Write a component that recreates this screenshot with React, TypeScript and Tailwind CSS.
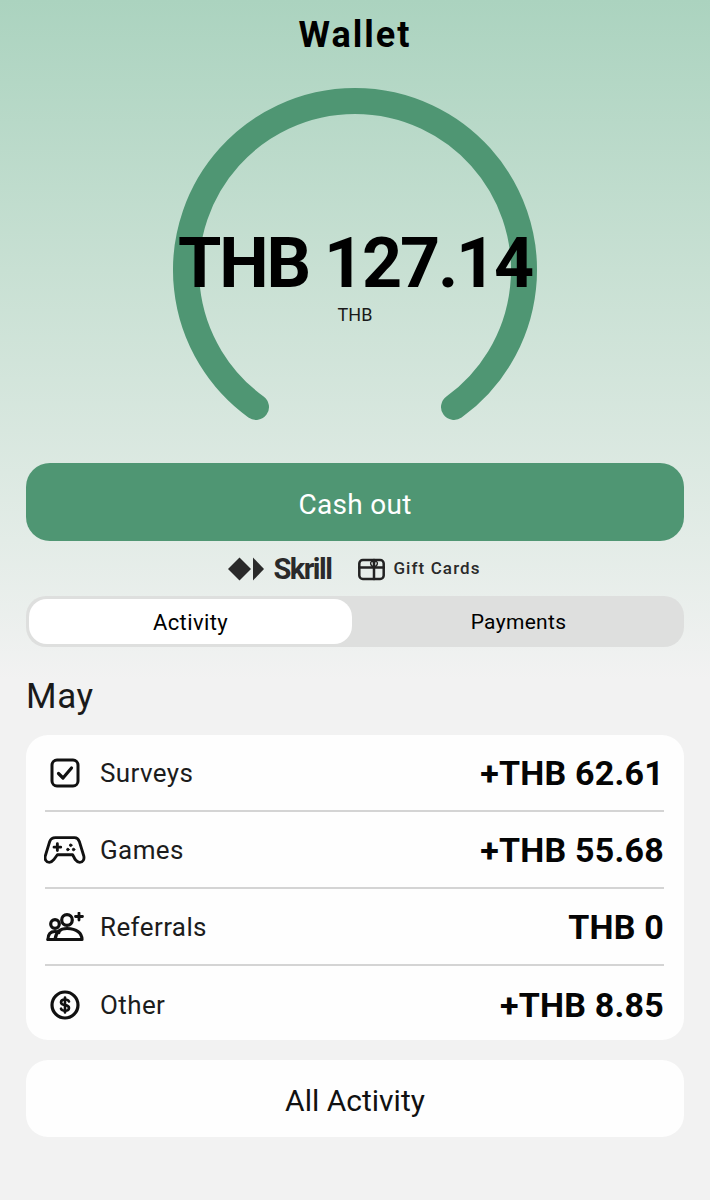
import React from "react";

function Row({ icon, label, value, last }: { icon: React.ReactNode; label: string; value: string; last?: boolean }) {
  return (
    <div className={`flex h-[77px] items-center ml-[19px] mr-[20px] pt-[2px] ${last ? "" : "border-b-2 border-[#d4d4d4]"}`}>
      <div className="w-[42px] flex justify-center -ml-[1px] -mt-[2px]">{icon}</div>
      <span className="ml-[14px] text-[26px] text-[#1c1c1c] tracking-[0.4px]">{label}</span>
      <span className="ml-auto text-[34px] font-bold text-[#050505] tracking-[0.2px]">{value}</span>
    </div>
  );
}

const CheckIcon = (
  <svg width="30" height="30" viewBox="0 0 30 30" fill="none" stroke="#111" strokeWidth="3" strokeLinecap="round" strokeLinejoin="round">
    <rect x="2" y="2" width="26" height="26" rx="5" />
    <path d="M8.500 15.500l4.500 4.500 8.500-10" strokeWidth="3.200" />
  </svg>
);

const GameIcon = (
  <svg width="44" height="30" viewBox="0 0 44 30" fill="none" stroke="#111" strokeWidth="3" strokeLinecap="round" strokeLinejoin="round">
    <path d="M12 2h20c2.500 0 4 1.200 5 4l4.600 15c1 3.600-.8 7-4.200 7-2 0-3.200-1-4.600-2.800L30 20H14l-3.800 5.200C8.800 27 7.600 28 5.600 28c-3.400 0-5.200-3.400-4.200-7L6 6c1-2.800 3-4 6-4z" />
    <path d="M10.500 12h7M14 8.500v7" />
    <circle cx="28" cy="10" r="1.300" fill="#111" strokeWidth="1" />
    <circle cx="25" cy="14.500" r="1.300" fill="#111" strokeWidth="1" />
    <circle cx="31" cy="14.500" r="1.300" fill="#111" strokeWidth="1" />
  </svg>
);

const RefIcon = (
  <svg width="38" height="30" viewBox="0 0 38 30" fill="none" stroke="#111" strokeWidth="3.200" strokeLinecap="round" strokeLinejoin="round">
    <circle cx="9" cy="12" r="4.300" />
    <circle cx="21" cy="8" r="5.300" />
    <path d="M2 27.500c0-5 2.500-8 7-8 1.500 0 3 .4 4 1" />
    <path d="M2 27.500h34c0-6-5-11-15-11-6 0-11 3-12 11" />
    <path d="M33 1v7M29.500 4.500h7" strokeWidth="2.800" />
  </svg>
);

const DollarIcon = (
  <svg width="30" height="30" viewBox="0 0 30 30" fill="none" stroke="#111" strokeWidth="3.200" strokeLinecap="round" strokeLinejoin="round">
    <circle cx="15" cy="15" r="13" />
    <path d="M19 11.500c-.6-1.400-2-2-4-2-2.400 0-4 1-4 2.800s1.600 2.400 4 2.800 4 1 4 2.800-1.600 2.800-4 2.800c-2 0-3.400-.6-4-2" strokeWidth="2.600" />
    <path d="M15 7.500v15" strokeWidth="2.600" />
  </svg>
);

export default function App() {
  return (
    <div
      className="w-[710px] h-[1200px] overflow-hidden bg-[#f2f2f2] bg-[linear-gradient(180deg,#abd3bf_0px,#c8e0d3_270px,#e3ece7_540px,#f2f2f2_680px)] px-[26px] flex flex-col"
      style={{ fontFamily: "Roboto, 'Noto Sans', sans-serif" }}
    >
      <h1 className="text-center text-[36px] font-bold text-black h-[40px] leading-[40px] mt-[15px] mb-[-1px] tracking-[2px]">Wallet</h1>

      <div className="relative h-[328px] mt-[34px] flex justify-center">
        <svg className="overflow-visible" width="364" height="328" viewBox="0 0 364 328" fill="none">
          <path d="M83 319A169 169 0 1 1 281 319" stroke="#4f9673" strokeWidth="26" strokeLinecap="round" />
        </svg>
        <div className="absolute inset-x-0 top-[127px] flex flex-col items-center">
          <div className="text-[70px] leading-[96px] font-bold text-black tracking-[-2.200px] whitespace-nowrap">THB 127.14</div>
          <div className="text-[18px] leading-[22px] text-[#1a1a1a] -mt-[7px]">THB</div>
        </div>
      </div>

      <button className="mt-[47px] h-[78px] pt-[5px] rounded-[24px] bg-[#4f9673] text-white text-[28px] tracking-[0.3px] shrink-0">Cash out</button>

      <div className="h-[55px] flex items-center justify-center shrink-0 pt-[1px] pr-[1px]">
        <svg width="36" height="24" viewBox="0 0 36 24" fill="#2a2a2a">
          <path d="M11.500 .5L23 12 11.500 23.500 0 12z" />
          <path d="M25 .5L36 12 25 23.500z" />
        </svg>
        <span className="ml-[9px] text-[29px] font-bold text-[#2a2a2a] tracking-[-1.500px] leading-none">Skrill</span>
        <svg className="ml-[27px]" width="27" height="23" viewBox="0 0 27 23" fill="none" stroke="#222" strokeWidth="2.500" strokeLinecap="round" strokeLinejoin="round">
          <rect x="1.300" y="2" width="24.400" height="19" rx="3.500" />
          <path d="M1.300 9.500h24.400M16 2v19" />
          <path d="M16 9c-3-.5-4.500-4-2.500-5.500S16 6 16 9c0-3 .5-7 2.500-5.500S19 8.500 16 9z" strokeWidth="1.400" />
        </svg>
        <span className="ml-[8px] text-[17px] font-medium text-[#2a2a2a] tracking-[1.100px]">Gift Cards</span>
      </div>

      <div className="h-[51px] rounded-[20px] bg-[#dedfde] p-[3px] flex shrink-0">
        <div className="w-[323px] pt-[2px] rounded-[18px] bg-white flex items-center justify-center text-[22px] text-black tracking-[0.4px]">Activity</div>
        <div className="flex-1 pt-[2px] flex items-center justify-center text-[21px] text-black tracking-[0.3px] pl-[4px]">Payments</div>
      </div>

      <div className="mt-[29px] h-[40px] text-[35px] leading-[42px] text-[#1a1a1a] tracking-[0.6px] shrink-0">May</div>

      <div className="mt-[19px] h-[305px] rounded-[22px] bg-[#fefefe] overflow-hidden shrink-0">
        <Row icon={CheckIcon} label="Surveys" value="+THB 62.61" />
        <Row icon={GameIcon} label="Games" value="+THB 55.68" />
        <Row icon={RefIcon} label="Referrals" value="THB 0" />
        <Row icon={DollarIcon} label="Other" value="+THB 8.85" last />
      </div>

      <div className="mt-[20px] h-[77px] pt-[3px] rounded-[22px] bg-[#fefefe] flex items-center justify-center text-[30px] text-[#111] shrink-0">All Activity</div>
    </div>
  );
}
